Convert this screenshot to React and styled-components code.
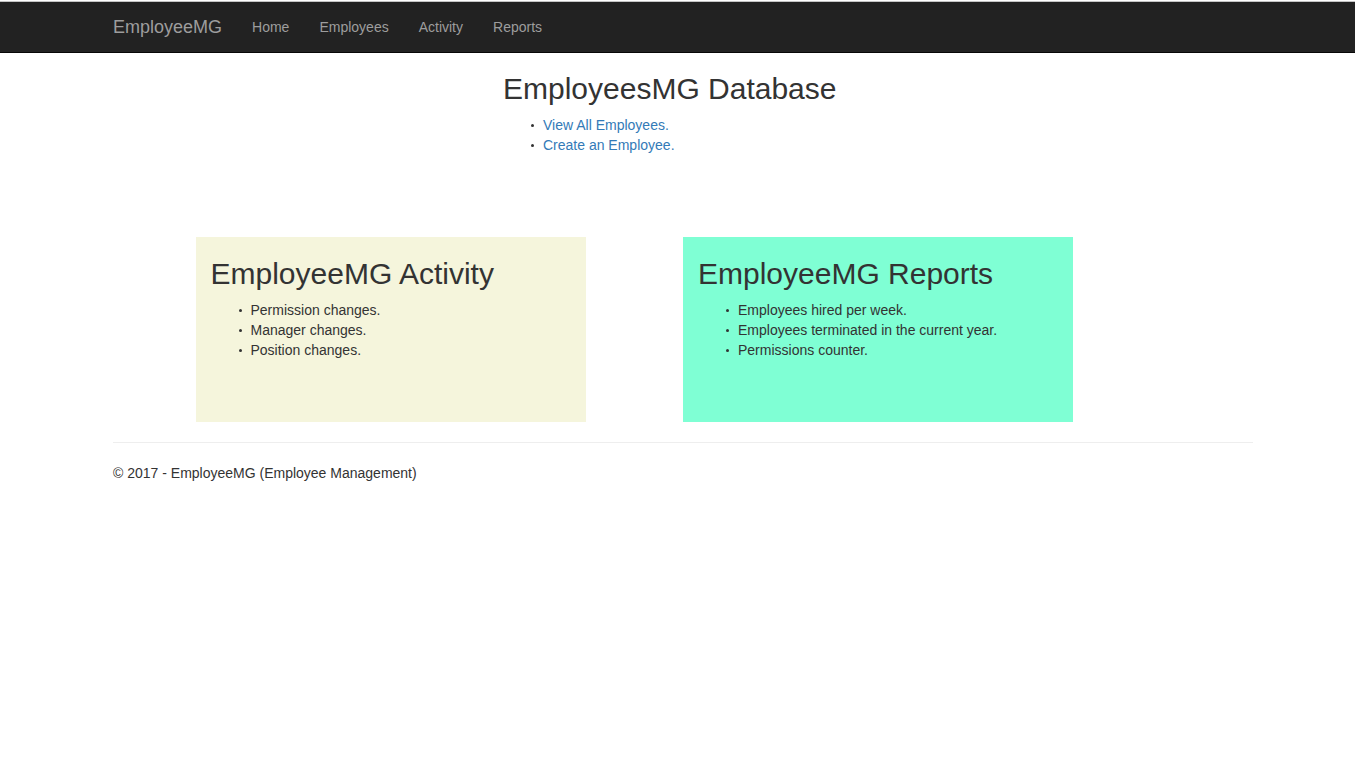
import React from "react";
import styled, { createGlobalStyle } from "styled-components";

const GlobalStyle = createGlobalStyle`
  html, body {
    margin: 0;
    padding: 0;
    background: #fff;
  }
  body {
    padding-top: 1px;
    font-family: "Liberation Sans", Arial, Helvetica, sans-serif;
    font-size: 14px;
    line-height: 1.42857143;
    color: #333;
  }
  * {
    box-sizing: border-box;
  }
`;

const Navbar = styled.nav`
  background: #222;
  border-top: 1px solid #c4c4c4;
  border-bottom: 1px solid #080808;
  min-height: 50px;
`;

const Container = styled.div`
  width: 1170px;
  margin-left: 98px;
  padding: 0 15px;
`;

const NavInner = styled.div`
  display: flex;
  align-items: center;
  height: 50px;
  margin-left: -15px;
`;

const Brand = styled.a`
  padding: 15px;
  font-size: 18px;
  line-height: 20px;
  color: #9d9d9d;
  text-decoration: none;
`;

const NavLink = styled.a`
  padding: 15px;
  line-height: 20px;
  color: #9d9d9d;
  text-decoration: none;
`;

const Row = styled.div`
  display: flex;
  margin: 0 -15px;
  padding-left: ${(p) => p.$offset || 0}px;
  gap: ${(p) => p.$gap || 0}px;
`;

const Col = styled.div`
  width: 390px;
  padding: 0 15px;
  background: ${(p) => p.$bg || "transparent"};
  height: ${(p) => (p.$height ? `${p.$height}px` : "auto")};
`;

const Title = styled.h2`
  font-size: 30px;
  font-weight: 500;
  line-height: 1.1;
  margin: ${(p) => (p.$top ? p.$top : 20)}px 0 10px;
  color: #333;
  white-space: nowrap;
`;

const List = styled.ul`
  margin: 0 0 10px;
  padding-left: 40px;
  white-space: nowrap;
  list-style: none;

  li {
    position: relative;
  }

  li::before {
    content: "";
    position: absolute;
    left: -12px;
    top: 9px;
    width: 3px;
    height: 3px;
    border-radius: 50%;
    background: #333;
  }
`;

const Link = styled.a`
  color: #337ab7;
  text-decoration: none;
`;

const Spacer = styled.div`
  height: 72px;
`;

const Rule = styled.hr`
  margin: 20px 0;
  border: 0;
  border-top: 1px solid #eee;
`;

const Footer = styled.footer`
  p {
    margin: 0 0 10px;
  }
`;

const cards = [
  {
    title: "EmployeeMG Activity",
    bg: "#f5f5dc",
    items: ["Permission changes.", "Manager changes.", "Position changes."],
  },
  {
    title: "EmployeeMG Reports",
    bg: "#7fffd4",
    items: [
      "Employees hired per week.",
      "Employees terminated in the current year.",
      "Permissions counter.",
    ],
  },
];

export default function App() {
  return (
    <>
      <GlobalStyle />
      <Navbar>
        <Container>
          <NavInner>
            <Brand href="#">EmployeeMG</Brand>
            <NavLink href="#">Home</NavLink>
            <NavLink href="#">Employees</NavLink>
            <NavLink href="#">Activity</NavLink>
            <NavLink href="#">Reports</NavLink>
          </NavInner>
        </Container>
      </Navbar>
      <Container>
        <Row $offset={390}>
          <Col>
            <Title $top={19}>EmployeesMG Database</Title>
            <List>
              <li>
                <Link href="#">View All Employees.</Link>
              </li>
              <li>
                <Link href="#">Create an Employee.</Link>
              </li>
            </List>
          </Col>
        </Row>
        <Spacer />
        <Row $offset={97.5} $gap={97.5}>
          {cards.map((card) => (
            <Col key={card.title} $bg={card.bg} $height={185}>
              <Title>{card.title}</Title>
              <List>
                {card.items.map((item) => (
                  <li key={item}>{item}</li>
                ))}
              </List>
            </Col>
          ))}
        </Row>
        <Rule />
        <Footer>
          <p>© 2017 - EmployeeMG (Employee Management)</p>
        </Footer>
      </Container>
    </>
  );
}
